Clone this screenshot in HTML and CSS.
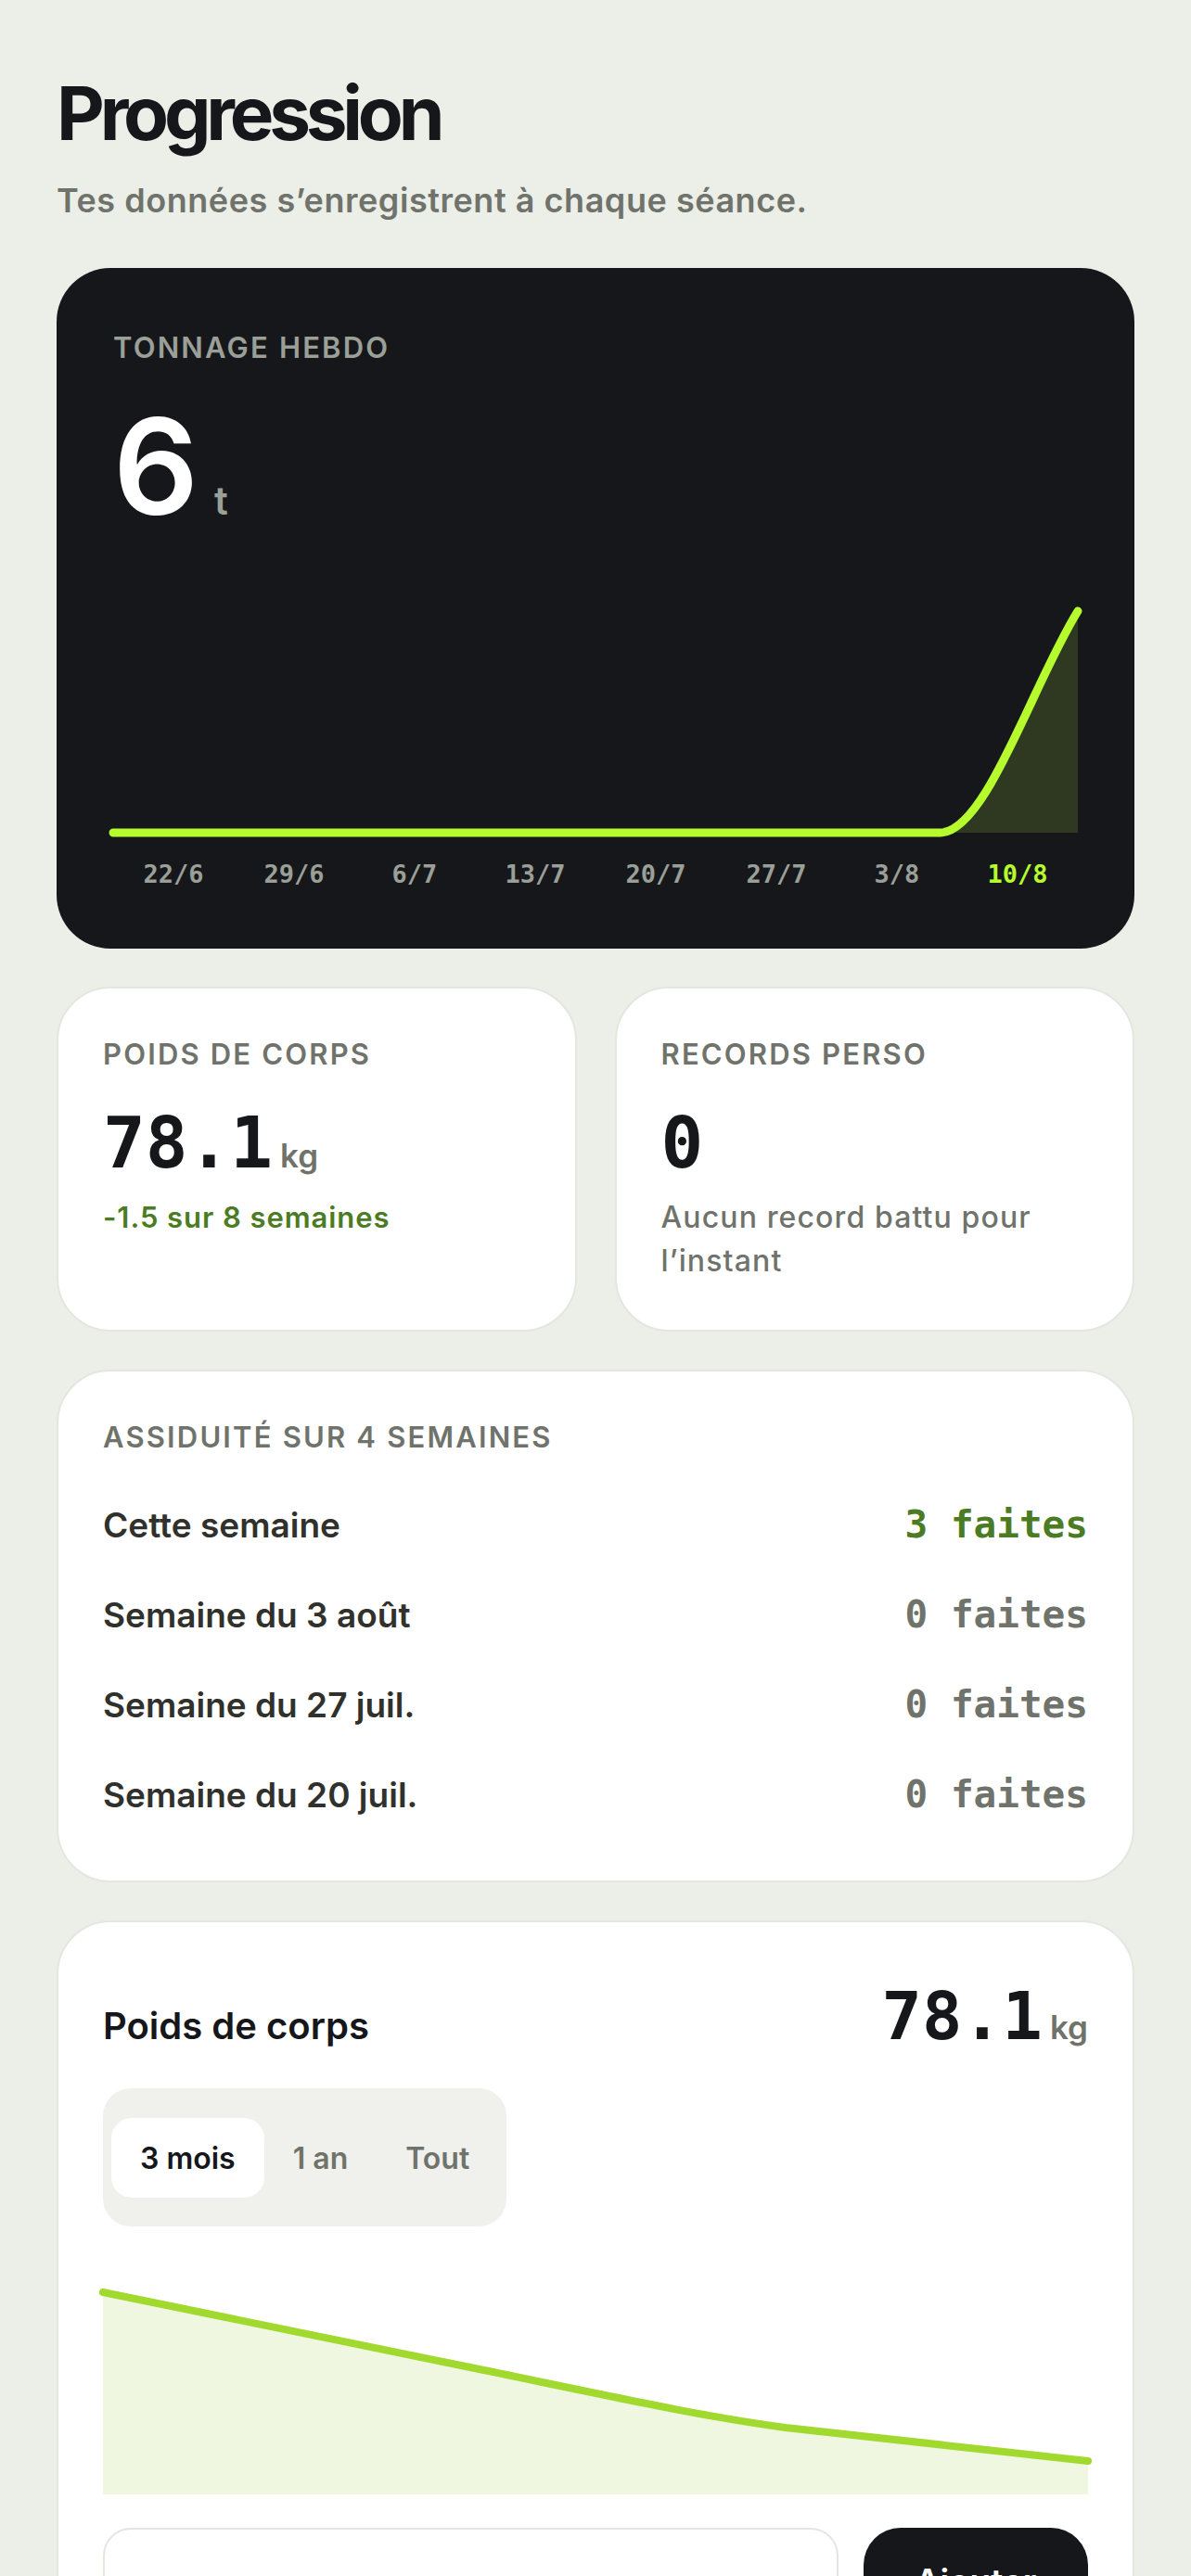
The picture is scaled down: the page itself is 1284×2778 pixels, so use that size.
FILE: index.html
```html
<!DOCTYPE html>
<html lang="fr">
<head>
    <meta charset="UTF-8">
    <meta name="viewport" content="width=device-width, initial-scale=1.0">
    <title>Progression</title>
    <link rel="stylesheet" href="styles.css">
</head>
<body>
    <main>
        <header class="entete-page">
            <h1>Progression</h1>
            <p class="sous-titre">Tes données s’enregistrent à chaque séance.</p>
        </header>

        <section class="carte-sombre">
            <h2 class="etiquette">Tonnage hebdo</h2>
            <div class="grand-chiffre">
                <span class="valeur">6</span>
                <span class="unite">t</span>
            </div>
            <svg class="graphique" viewBox="0 0 1040 270">
                <path d="M891.4 259 C941 259 990.5 99.7 1040 20 L1040 259 Z" fill="#2f3921"/>
                <path d="M0 259 L891.4 259 C941 259 990.5 99.7 1040 20" fill="none" stroke="#b6fb2d" stroke-width="9" stroke-linecap="round" stroke-linejoin="round"/>
            </svg>
            <div class="axe">
                <span>22/6</span>
                <span>29/6</span>
                <span>6/7</span>
                <span>13/7</span>
                <span>20/7</span>
                <span>27/7</span>
                <span>3/8</span>
                <span class="actuel">10/8</span>
            </div>
        </section>

        <section class="stats">
            <div class="carte">
                <h2 class="etiquette">Poids de corps</h2>
                <div class="chiffre">
                    <span class="valeur">78.1</span>
                    <span class="unite">kg</span>
                </div>
                <p class="texte vert">-1.5 sur 8 semaines</p>
            </div>
            <div class="carte">
                <h2 class="etiquette">Records perso</h2>
                <div class="chiffre">
                    <span class="valeur">0</span>
                </div>
                <p class="texte">Aucun record battu pour l’instant</p>
            </div>
        </section>

        <section class="carte assiduite">
            <h2 class="etiquette">Assiduité sur 4 semaines</h2>
            <ul class="semaines">
                <li class="ligne">
                    <span>Cette semaine</span>
                    <span class="compte vert">3 faites</span>
                </li>
                <li class="ligne">
                    <span>Semaine du 3 août</span>
                    <span class="compte">0 faites</span>
                </li>
                <li class="ligne">
                    <span>Semaine du 27 juil.</span>
                    <span class="compte">0 faites</span>
                </li>
                <li class="ligne">
                    <span>Semaine du 20 juil.</span>
                    <span class="compte">0 faites</span>
                </li>
            </ul>
        </section>

        <section class="carte poids">
            <div class="entete-poids">
                <h2 class="titre">Poids de corps</h2>
                <div class="chiffre-droite">
                    <span class="valeur">78.1</span>
                    <span class="unite">kg</span>
                </div>
            </div>
            <div class="segments">
                <button class="actif">3 mois</button>
                <button>1 an</button>
                <button>Tout</button>
            </div>
            <svg class="courbe" viewBox="0 0 1062 248">
                <path d="M0 30 L396 111 C556 144 646 164 736 176 L1062 212 L1062 248 L0 248 Z" fill="#eff7e1"/>
                <path d="M0 30 L396 111 C556 144 646 164 736 176 L1062 212" fill="none" stroke="#a2d92e" stroke-width="8" stroke-linecap="round" stroke-linejoin="round"/>
            </svg>
            <form class="saisie" onsubmit="return false">
                <input type="text" aria-label="Nouveau poids">
                <button type="submit">Ajouter</button>
            </form>
        </section>
    </main>
</body>
</html>
```

FILE: styles.css
```css
body {
    background-color: #eceee8;
    color: #16171b;
    margin: 0;
    font-family: "Inter", "Noto Sans", sans-serif;
}

main {
    padding: 82px 61px 80px;
    display: flex;
    flex-direction: column;
    gap: 41px;
}

h1 {
    font-size: 80px;
    font-weight: 700;
    line-height: 80px;
    letter-spacing: -0.065em;
    margin: 0;
}

.entete-page {
    margin-bottom: 10px;
}

.sous-titre {
    margin: 33px 0 0;
    font-size: 36px;
    line-height: 43px;
    font-weight: 600;
    letter-spacing: 0.015em;
    color: #6f736b;
}

.etiquette {
    margin: 0;
    font-size: 31px;
    line-height: 37px;
    font-weight: 600;
    letter-spacing: 0.07em;
    text-transform: uppercase;
    color: #6f736b;
}

/* carte du tonnage */
.carte-sombre {
    background-color: #16171b;
    border-radius: 58px;
    padding: 67px 61px 64px;
    color: #fff;
}

.carte-sombre .etiquette {
    color: #9a9f97;
}

.grand-chiffre {
    display: flex;
    align-items: baseline;
    gap: 17px;
    margin-top: 38px;
}

.grand-chiffre .valeur {
    font-size: 144px;
    font-weight: 600;
    line-height: 144px;
}

.grand-chiffre .unite {
    font-size: 42px;
    font-weight: 600;
    color: #9a9f97;
}

.graphique {
    display: block;
    width: 100%;
    height: 270px;
    margin-top: 64px;
    overflow: visible;
}

.axe {
    display: grid;
    grid-template-columns: repeat(8, 1fr);
    margin-top: 18px;
    font-family: "DejaVu Sans Mono", monospace;
    font-size: 27px;
    line-height: 32px;
    font-weight: 700;
    color: #9a9f97;
    text-align: center;
}

.axe .actuel {
    color: #b6fb2d;
}

/* cartes blanches */
.stats {
    display: grid;
    grid-template-columns: 1fr 1fr;
    gap: 41px;
}

.carte {
    background-color: #fff;
    border: 2px solid #e4e6df;
    border-radius: 58px;
    padding: 52px 48px 46px;
}

.stats .carte {
    padding-bottom: 51px;
}

.chiffre {
    display: flex;
    align-items: baseline;
    margin-top: 39px;
}

.chiffre .valeur,
.chiffre-droite .valeur {
    font-family: "DejaVu Sans Mono", monospace;
    font-size: 76px;
    line-height: 78px;
    font-weight: 700;
}

.chiffre .unite,
.chiffre-droite .unite {
    margin-left: 8px;
    font-size: 35px;
    font-weight: 600;
    color: #6f736b;
}

.texte {
    margin: 17px 0 0;
    font-size: 32px;
    line-height: 47px;
    font-weight: 500;
    letter-spacing: 0.035em;
    color: #6f736b;
}

.vert {
    color: #4b7c23 !important;
    font-weight: 600;
}

.texte.vert {
    font-size: 31px;
    letter-spacing: 0.03em;
}

/* assiduite */
.assiduite {
    padding-bottom: 64px;
}

.semaines {
    list-style: none;
    margin: 48px 0 0;
    padding: 0;
    display: flex;
    flex-direction: column;
    gap: 40px;
}

.ligne {
    display: flex;
    justify-content: space-between;
    align-items: baseline;
    font-size: 37px;
    line-height: 56px;
    font-weight: 600;
    color: #30312d;
}

.compte {
    font-family: "DejaVu Sans Mono", monospace;
    font-size: 41px;
    font-weight: 700;
    color: #6f736b;
}

/* poids de corps */
.entete-poids {
    display: flex;
    justify-content: space-between;
    align-items: baseline;
    margin-top: 13px;
}

.titre {
    margin: 0;
    font-size: 40px;
    font-weight: 600;
}

.chiffre-droite {
    display: flex;
    align-items: baseline;
}

.chiffre-droite .valeur {
    font-size: 72px;
    line-height: 72px;
}

.segments {
    display: flex;
    width: fit-content;
    margin-top: 42px;
    padding: 32px 9px 31px;
    background-color: #f0f1ed;
    border-radius: 30px;
}

.segments button {
    height: 86px;
    padding: 0 31px;
    border: none;
    border-radius: 22px;
    background: transparent;
    font-family: "Inter", sans-serif;
    font-size: 32px;
    font-weight: 600;
    color: #6f736b;
}

.segments .actif {
    background-color: #fff;
    color: #16171b;
}

.courbe {
    display: block;
    width: 100%;
    height: 248px;
    margin-top: 41px;
    overflow: visible;
}

.saisie {
    display: flex;
    gap: 27px;
    margin-top: 36px;
}

.saisie input {
    flex: 1;
    height: 114px;
    box-sizing: border-box;
    border: 2px solid #e4e6df;
    border-radius: 30px;
    padding: 0 30px;
    font-size: 36px;
}

.saisie button {
    width: 242px;
    height: 114px;
    border: none;
    border-radius: 40px;
    background-color: #16171b;
    color: #fff;
    font-family: "Inter", sans-serif;
    font-size: 37px;
    font-weight: 600;
}
```
